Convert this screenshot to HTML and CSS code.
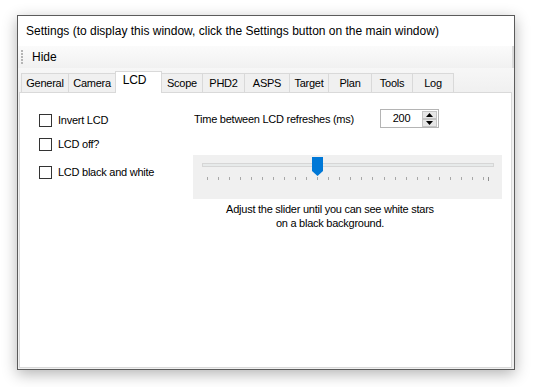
FILE: index.html
```html
<!DOCTYPE html>
<html lang="en">
<head>
    <meta charset="UTF-8">
    <title>Settings</title>
    <link rel="stylesheet" href="styles.css">
</head>
<body>

    <div class="window">
        <div class="header">
            <div class="title">Settings (to display this window, click the Settings button on the main window)</div>

            <!-- Tool strip -->
            <div class="toolbar">
                <span class="grip"></span>
                <span class="tool-item">Hide</span>
                <span class="toolbar-end"></span>
            </div>

            <!-- Tabs -->
            <div class="tabs">
                <div class="tab w-general">General</div>
                <div class="tab w-camera">Camera</div>
                <div class="tab active w-lcd">LCD</div>
                <div class="tab w-scope">Scope</div>
                <div class="tab w-phd2">PHD2</div>
                <div class="tab w-asps">ASPS</div>
                <div class="tab w-target">Target</div>
                <div class="tab w-plan">Plan</div>
                <div class="tab w-tools">Tools</div>
                <div class="tab w-log">Log</div>
            </div>
        </div>

        <div class="panel">
            <div class="options">
                <label class="check first"><span class="box"></span>Invert LCD</label>
                <label class="check second"><span class="box"></span>LCD off?</label>
                <label class="check third"><span class="box"></span>LCD black and white</label>
            </div>

            <div class="refresh">
                <div class="refresh-row">
                    <span class="refresh-label">Time between LCD refreshes (ms)</span>
                    <div class="spinner">
                        <span class="spinner-value">200</span>
                        <div class="spinner-buttons">
                            <span class="spin-btn">
                                <svg width="7" height="4" viewBox="0 0 7 4"><polygon points="0,4 7,4 3.5,0" fill="#000"/></svg>
                            </span>
                            <span class="spin-btn">
                                <svg width="7" height="4" viewBox="0 0 7 4"><polygon points="0,0 7,0 3.5,4" fill="#000"/></svg>
                            </span>
                        </div>
                    </div>
                </div>

                <!-- Brightness slider -->
                <div class="slider">
                    <div class="track"></div>
                    <svg class="thumb" width="11" height="19" viewBox="0 0 11 19">
                        <polygon points="0,0 11,0 11,14 5.5,19 0,14" fill="#0078d7"/>
                    </svg>
                    <div class="ticks">
                        <div class="tick-run">
                            <span></span><span></span><span></span><span></span><span></span>
                            <span></span><span></span><span></span><span></span><span></span>
                            <span></span><span></span><span></span><span></span><span></span>
                            <span></span><span></span><span></span><span></span><span></span>
                            <span></span><span></span><span></span><span></span><span></span>
                            <span></span>
                        </div>
                        <span class="tick-end"></span>
                    </div>
                </div>

                <p class="hint">Adjust the slider until you can see white stars<br>on a black background.</p>
            </div>
        </div>
    </div>

</body>
</html>
```

FILE: styles.css
```css
/* Global Styles */
* {
    margin: 0;
    padding: 0;
    box-sizing: border-box;
}

body {
    font-family: 'Segoe UI', 'Liberation Sans', Arial, sans-serif;
    font-size: 12px;
    color: #000;
    background: #fff;
    width: 533px;
    height: 387px;
    overflow: hidden;
}

/* Window frame */
.window {
    width: 498px;
    height: 355px;
    margin: 15px 0 0 17px;
    border: 1px solid #5b5b5b;
    background: #f0f0f0;
    box-shadow: 0 4px 14px rgba(0, 0, 0, 0.3);
    display: flex;
    flex-direction: column;
}

.header {
    background: linear-gradient(#ffffff 0%, #ffffff 30%, #f0f0f0 100%);
}

.title {
    height: 30px;
    line-height: 30px;
    padding-left: 8px;
    background: #fff;
    white-space: nowrap;
}

/* Tool strip */
.toolbar {
    height: 22px;
    display: flex;
    align-items: center;
    background: linear-gradient(#fbfbfb, #f1f1f1);
}

.grip {
    width: 2px;
    height: 14px;
    margin-left: 3px;
    background: repeating-linear-gradient(#b5b5b5 0, #b5b5b5 2px, transparent 2px, transparent 3px);
}

.tool-item {
    margin-left: 9px;
}

.toolbar-end {
    width: 2px;
    height: 22px;
    margin-left: auto;
    background: #dcdcdc;
}

/* Tabs */
.tabs {
    display: flex;
    align-items: flex-end;
    height: 21px;
    margin-top: 3px;
    padding-left: 3px;
    font-size: 11px;
    letter-spacing: -0.25px;
}

.tab {
    height: 19px;
    line-height: 18px;
    margin-left: -1px;
    text-align: center;
    white-space: nowrap;
    background: #f0f0f0;
    border: 1px solid #d9d9d9;
    border-bottom: none;
}

.tab:first-child {
    margin-left: 0;
}

.tab.active {
    height: 22px;
    line-height: 17px;
    padding-right: 8px;
    font-size: 12px;
    background: #fff;
    position: relative;
    z-index: 1;
    margin-bottom: -1px;
}

.w-general { width: 48px; }
.w-camera { width: 48px; }
.w-lcd { width: 47px; }
.w-scope { width: 42px; }
.w-phd2 { width: 43px; }
.w-asps { width: 46px; }
.w-target { width: 40px; }
.w-plan { width: 44px; }
.w-tools { width: 42px; }
.w-log { width: 42px; }

/* Tab page */
.panel {
    flex: 1;
    margin: 0 2px 1px 1px;
    background: #fff;
    border: 1px solid #d9d9d9;
    display: flex;
    padding-top: 16px;
    font-size: 11px;
    letter-spacing: -0.25px;
}

.options {
    width: 173px;
    padding-left: 19px;
    display: flex;
    flex-direction: column;
}

.check {
    display: flex;
    align-items: center;
    height: 20px;
}

.check.first {
    margin-top: 1px;
}

.check.second {
    margin-top: 4px;
}

.check.third {
    margin-top: 8px;
}

.box {
    width: 13px;
    height: 13px;
    border: 1px solid #333;
    background: #fff;
    margin-right: 6px;
}

/* Refresh settings */
.refresh {
    width: 309px;
}

.refresh-row {
    display: grid;
    grid-template-columns: 187px 59px;
    align-items: center;
    height: 19px;
}

.refresh-label {
    padding-left: 1px;
    white-space: nowrap;
}

.spinner {
    height: 19px;
    border: 1px solid #b4b4b4;
    display: flex;
}

.spinner-value {
    width: 41px;
    line-height: 17px;
    text-align: center;
}

.spinner-buttons {
    width: 15px;
    margin-top: 1px;
    display: flex;
    flex-direction: column;
}

.spin-btn {
    height: 8px;
    background: #e6e6e6;
    border: 1px solid #c4c4c4;
    display: flex;
    align-items: center;
    justify-content: center;
}

/* Slider */
.slider {
    position: relative;
    height: 44px;
    margin-top: 27px;
    background: #f0f0f0;
    padding-top: 8px;
}

.track {
    height: 4px;
    margin: 0 8px 0 9px;
    background: #e7eaea;
    border: 1px solid #d6d6d6;
}

.thumb {
    position: absolute;
    left: 119px;
    top: 2px;
}

.ticks {
    display: flex;
    align-items: flex-start;
    margin: 10px 0 0 14px;
}

.tick-run {
    width: 277px;
    display: flex;
    justify-content: space-between;
}

.tick-run span,
.tick-end {
    width: 1px;
    height: 3px;
    background: #a8a8a8;
}

.tick-end {
    height: 4px;
    margin-left: 4px;
    background: #8f8f8f;
}

.hint {
    width: 274px;
    margin-top: 3px;
    text-align: center;
    line-height: 14px;
}
```
